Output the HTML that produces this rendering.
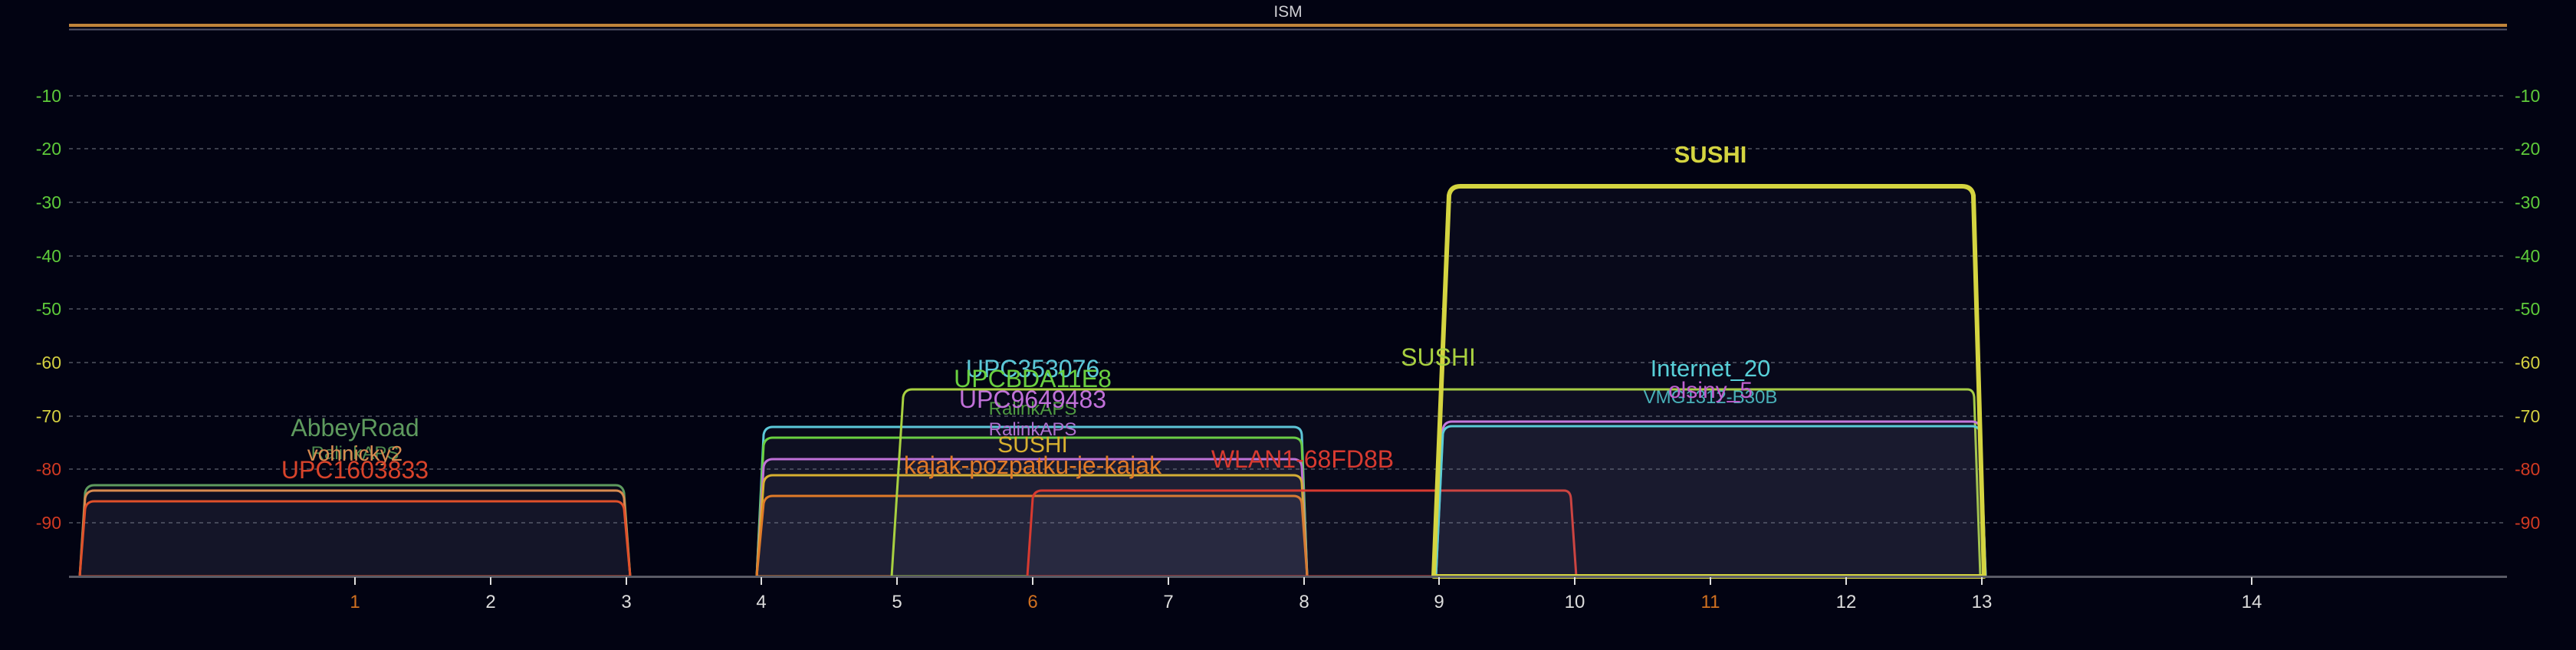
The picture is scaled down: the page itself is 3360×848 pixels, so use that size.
<!DOCTYPE html>
<html><head><meta charset="utf-8"><style>
html,body{margin:0;padding:0;background:#020312;width:3360px;height:848px;overflow:hidden}
svg{display:block}
text{font-family:"Liberation Sans",sans-serif}
</style></head><body>
<svg width="3360" height="848" viewBox="0 0 3360 848" xmlns="http://www.w3.org/2000/svg">
<rect width="3360" height="848" fill="#020312"/>
<text x="1680" y="22" font-size="21" fill="#cfcfd4" text-anchor="middle">ISM</text>
<rect x="90" y="31" width="3180" height="4" fill="#c0843a"/>
<rect x="90" y="37.5" width="3180" height="2" fill="#55566a"/>
<g stroke="#3c3f4c" stroke-width="2" stroke-dasharray="5 5">
<line x1="90" y1="125" x2="3268" y2="125"/><line x1="90" y1="194" x2="3268" y2="194"/>
<line x1="90" y1="264" x2="3268" y2="264"/><line x1="90" y1="334" x2="3268" y2="334"/>
<line x1="90" y1="403" x2="3268" y2="403"/><line x1="90" y1="473" x2="3268" y2="473"/>
<line x1="90" y1="543" x2="3268" y2="543"/><line x1="90" y1="612" x2="3268" y2="612"/>
<line x1="90" y1="682" x2="3268" y2="682"/>
</g>
<g font-size="23" text-anchor="end">
<text x="80" y="133" fill="#5ecb3a">-10</text><text x="80" y="202" fill="#5ecb3a">-20</text>
<text x="80" y="272" fill="#5ecb3a">-30</text><text x="80" y="342" fill="#5ecb3a">-40</text>
<text x="80" y="411" fill="#5ecb3a">-50</text><text x="80" y="481" fill="#d4d040">-60</text>
<text x="80" y="551" fill="#d4d040">-70</text><text x="80" y="620" fill="#d33a22">-80</text>
<text x="80" y="690" fill="#d33a22">-90</text>
</g>
<g font-size="23">
<text x="3280" y="133" fill="#5ecb3a">-10</text><text x="3280" y="202" fill="#5ecb3a">-20</text>
<text x="3280" y="272" fill="#5ecb3a">-30</text><text x="3280" y="342" fill="#5ecb3a">-40</text>
<text x="3280" y="411" fill="#5ecb3a">-50</text><text x="3280" y="481" fill="#d4d040">-60</text>
<text x="3280" y="551" fill="#d4d040">-70</text><text x="3280" y="620" fill="#d33a22">-80</text>
<text x="3280" y="690" fill="#d33a22">-90</text>
</g>
<g fill="rgba(140,145,180,0.05)" stroke-width="3" stroke-linejoin="round">
<path d="M104 752 L111 643 Q113 633 123 633 L803 633 Q812 633 814 643 L822 752 Z" stroke="#5e9a5e"/>
<path d="M104 752 L111 650 Q113 640 123 640 L803 640 Q812 640 814 650 L822 752 Z" stroke="#d88a50"/>
<path d="M104 752 L111 664 Q113 654 123 654 L803 654 Q812 654 814 664 L822 752 Z" stroke="#e0502a"/>
<path d="M987 752 L996 567 Q998 557 1008 557 L1687 557 Q1697 557 1698 567 L1705 752 Z" stroke="#5bc8d8"/>
<path d="M987 752 L996 581 Q998 571 1008 571 L1687 571 Q1697 571 1698 581 L1705 752 Z" stroke="#6ad040"/>
<path d="M987 752 L996 609 Q998 599 1008 599 L1687 599 Q1697 599 1698 609 L1705 752 Z" stroke="#c070d8"/>
<path d="M987 752 L996 630 Q998 620 1008 620 L1687 620 Q1697 620 1698 630 L1705 752 Z" stroke="#d8b030"/>
<path d="M987 752 L996 657 Q998 647 1008 647 L1687 647 Q1697 647 1698 657 L1705 752 Z" stroke="#e07a28"/>
<path d="M1163 752 L1178 518 Q1180 508 1190 508 L2566 508 Q2574 508 2575 518 L2583 752 Z" stroke="#a8d040"/>
<path d="M1340 752 L1347 650 Q1349 640 1359 640 L2040 640 Q2048 640 2049 650 L2056 752 Z" stroke="#d83a30"/>
<path d="M1873 752 L1882 560 Q1884 550 1894 550 L2572 550 Q2582 550 2583 560 L2590 752 Z" stroke="#c878e0"/>
<path d="M1873 752 L1882 566 Q1884 556 1894 556 L2572 556 Q2582 556 2583 566 L2590 752 Z" stroke="#58d0d8"/>
<path d="M1870 752 L1890 255 Q1892 243 1905 243 L2559 243 Q2572 243 2574 255 L2588 752 Z" stroke="#d4d440" stroke-width="6"/>
</g>
<rect x="90" y="751" width="3180" height="3" fill="#5a5b66"/>
<g stroke="#e0e0e0" stroke-width="2">
<line x1="463" y1="753" x2="463" y2="763"/><line x1="640" y1="753" x2="640" y2="763"/>
<line x1="817" y1="753" x2="817" y2="763"/><line x1="993" y1="753" x2="993" y2="763"/>
<line x1="1170" y1="753" x2="1170" y2="763"/><line x1="1347" y1="753" x2="1347" y2="763"/>
<line x1="1524" y1="753" x2="1524" y2="763"/><line x1="1701" y1="753" x2="1701" y2="763"/>
<line x1="1877" y1="753" x2="1877" y2="763"/><line x1="2054" y1="753" x2="2054" y2="763"/>
<line x1="2231" y1="753" x2="2231" y2="763"/><line x1="2408" y1="753" x2="2408" y2="763"/>
<line x1="2585" y1="753" x2="2585" y2="763"/><line x1="2937" y1="753" x2="2937" y2="763"/>
</g>
<g font-size="24" text-anchor="middle" fill="#dcdcdc">
<text x="463" y="793" fill="#d07020">1</text><text x="640" y="793">2</text>
<text x="817" y="793">3</text><text x="993" y="793">4</text>
<text x="1170" y="793">5</text><text x="1347" y="793" fill="#d07020">6</text>
<text x="1524" y="793">7</text><text x="1701" y="793">8</text>
<text x="1877" y="793">9</text><text x="2054" y="793">10</text>
<text x="2231" y="793" fill="#d07020">11</text><text x="2408" y="793">12</text>
<text x="2585" y="793">13</text><text x="2937" y="793">14</text>
</g>
<g text-anchor="middle">
<text x="463" y="569" font-size="32" fill="#5e9a5e">AbbeyRoad</text>
<text x="463" y="599" font-size="24" fill="#4e8a4e">RalinkAPS</text>
<text x="463" y="601" font-size="28" fill="#d88a50">vohnicky2</text>
<text x="463" y="624" font-size="32" fill="#d8432a">UPC1603833</text>
<text x="1347" y="492" font-size="32" fill="#5bc8d8">UPC353076</text>
<text x="1347" y="505" font-size="32" fill="#6ad040">UPCBDA11E8</text>
<text x="1347" y="541" font-size="24" fill="#4e9a40">RalinkAPS</text>
<text x="1347" y="532" font-size="32" fill="#c070d8">UPC9649483</text>
<text x="1347" y="568" font-size="24" fill="#b070d0">RalinkAPS</text>
<text x="1347" y="590" font-size="30" fill="#d8b030">SUSHI</text>
<text x="1347" y="618" font-size="32" fill="#e07a28">kajak-pozpatku-je-kajak</text>
<text x="1876" y="477" font-size="32" fill="#a8d040">SUSHI</text>
<text x="1699" y="610" font-size="32" fill="#d83a30">WLAN1-68FD8B</text>
<text x="2231" y="212" font-size="31" font-weight="bold" fill="#d4d440">SUSHI</text>
<text x="2231" y="491" font-size="31" fill="#58d0d8">Internet_20</text>
<text x="2231" y="526" font-size="24" fill="#48b0b8">VMG1312-B30B</text>
<text x="2231" y="519" font-size="30" fill="#c060d0">olsiny_5</text>
</g>
</svg>
</body></html>
